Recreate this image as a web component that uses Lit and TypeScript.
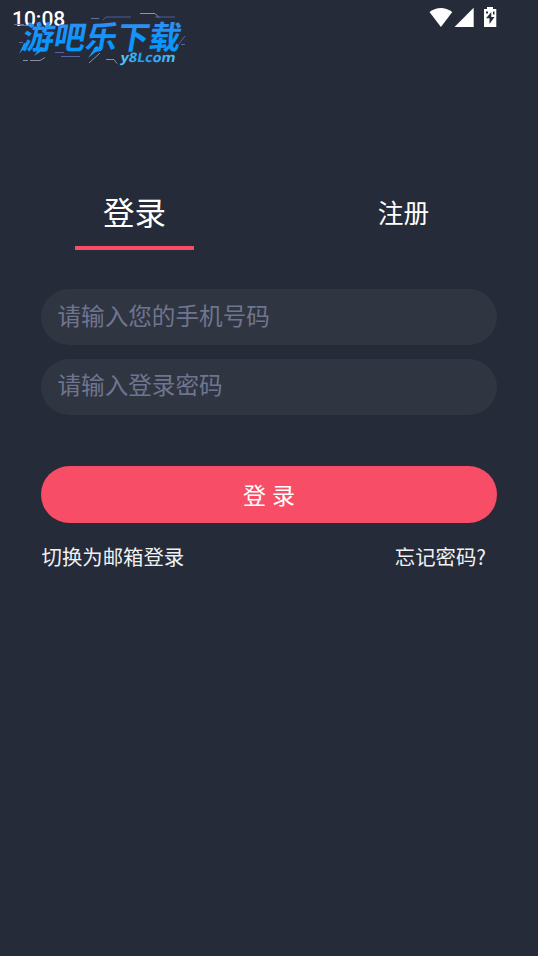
import { LitElement, css, html, svg } from 'lit'
import { customElement, property, state } from 'lit/decorators.js'
import { classMap } from 'lit/directives/class-map.js'

const traces = [
  { color: '#6a6f96', d: 'M91 18.5h8M20 25.500h8M14 24.500h10' },
  { color: '#4b5fa0', d: 'M103 20l3-3h25M155 17h20' },
  { color: '#8d94a5', d: 'M140 13.500h15l4 4' },
  { color: '#5b62a0', d: 'M23 42.500h-4M55 52.500h9M61 56.500h19M181 44.500h4M185 36l-7 9' },
  { color: '#8790a2', d: 'M30 60.500h10l5-3M23 60.500h5M100 53l-11 10M106 59.500h8l3 4' },
]

@customElement('brand-mark')
export class BrandMark extends LitElement {

  static get styles() {
    return css`
      :host {
        display: block;
      }
      svg {
        display: block;
      }
      text {
        font-family: "Noto Sans CJK SC", sans-serif;
        font-weight: 700;
      }
      .domain {
        font-family: "Open Sans", "Noto Sans", sans-serif;
        font-weight: 700;
      }
    `
  }

  render() {
    return html`
      <svg width="200" height="72" viewBox="0 0 200 72" fill="none">
        <defs>
          <linearGradient id="blue" x1="0" y1="0" x2="0" y2="1">
            <stop offset="0.3" stop-color="#2a90f5"></stop>
            <stop offset="0.65" stop-color="#0896ff"></stop>
          </linearGradient>
          <linearGradient id="sky" x1="0" y1="0" x2="1" y2="0">
            <stop offset="0" stop-color="#5fcaf5"></stop>
            <stop offset="0.4" stop-color="#1e9df5"></stop>
            <stop offset="1" stop-color="#4cc0f7"></stop>
          </linearGradient>
        </defs>
        ${traces.map((trace) => svg`<path d=${trace.d} stroke=${trace.color}></path>`)}
        <text transform="translate(21 48.500) skewX(-10)" font-size="32" textLength="158" lengthAdjust="spacingAndGlyphs" fill="url(#blue)">游吧乐下载</text>
        <path d="M28 44l-9 10 5-11zM46 48l-12 8 6-9zM101 48l-13 10 8-12z" fill="#1496fb"></path>
        <text class="domain" transform="translate(120 61.500) skewX(-10)" font-size="13" textLength="55" lengthAdjust="spacingAndGlyphs" fill="url(#sky)">y8Lcom</text>
      </svg>
    `
  }
}

@customElement('status-bar')
export class StatusBar extends LitElement {

  @property({ type: String })
  time = '10:08'

  static get styles() {
    return css`
      :host {
        box-sizing: border-box;
        display: flex;
        justify-content: space-between;
        height: 36px;
        padding: 6px 41px 0 12px;
      }
      .time {
        color: #fff;
        font: 500 21px/27px Roboto, sans-serif;
      }
      .icons {
        height: 22px;
        width: 68px;
      }
    `
  }

  render() {
    return html`
      <span class="time">${this.time}</span>
      <svg class="icons" viewBox="0 0 68 22" fill="#fff">
        <path d="M.5 6Q11.800-2 23.300 6L11.900 21z"></path>
        <path d="M44.700 1.800v19.200H25.500z"></path>
        <path fill-rule="evenodd" d="M58 1h6v2h3.300v18H55V3h3zM62.300 6l-5.300 6.300h3.500V18l5-7h-3.200zM57 5.500h2v2h-2zM64 5.500h1.500v3h-1.500z"></path>
      </svg>
    `
  }
}

@customElement('app-root')
export class AppRoot extends LitElement {

  @state()
  _tab: 'login' | 'register' = 'login'

  private _renderTab(id: 'login' | 'register', label: string) {
    return html`
      <button class=${classMap({ tab: true, active: this._tab === id })} @click=${() => { this._tab = id }}>
        <span class="tab-label">${label}</span>
      </button>
    `
  }

  static get styles() {
    return css`
      :host {
        background: #252b38;
        box-sizing: border-box;
        display: block;
        font-family: "Noto Sans CJK SC", sans-serif;
        height: 956px;
        overflow: hidden;
        position: relative;
      }
      button {
        background: none;
        border: 0;
        color: #fff;
        cursor: pointer;
        font: inherit;
        padding: 0;
      }
      brand-mark {
        left: 0;
        position: absolute;
        top: 0;
      }
      .tabs {
        display: grid;
        grid-template-columns: 1fr 1fr;
        height: 66px;
        margin-top: 148px;
      }
      .tab {
        align-items: center;
        display: flex;
        flex-direction: column;
        font-size: 25.700px;
        line-height: 56px;
      }
      .tab.active {
        font-size: 31.500px;
        line-height: 54px;
      }
      .tab.active::after {
        background: #f74d66;
        content: "";
        height: 4px;
        margin-top: 8px;
        width: 119px;
      }
      .form {
        display: flex;
        flex-direction: column;
        padding: 39px 41px 0;
      }
      .field {
        background: #303641;
        border: 0;
        border-radius: 28px;
        box-sizing: border-box;
        color: #fff;
        font-family: inherit;
        font-size: 23.600px;
        height: 56px;
        margin-bottom: 13.500px;
        outline: none;
        padding: 0 17px 5px 16.500px;
        width: 100%;
      }
      .field::placeholder {
        color: #6f7590;
        opacity: 1;
      }
      .submit {
        background: #f74d66;
        border-radius: 28.500px;
        font-size: 23px;
        height: 56.500px;
        line-height: 56.500px;
        margin-top: 38px;
        word-spacing: 1px;
      }
      .links {
        display: flex;
        font-size: 20.400px;
        justify-content: space-between;
        line-height: 30px;
        margin-top: 18.500px;
        padding: 0 11px 0 .5px;
      }
      .links button {
        color: #f0f1f3;
      }
    `
  }

  render() {
    return html`
      <status-bar></status-bar>
      <brand-mark></brand-mark>
      <div class="tabs">
        ${this._renderTab('login', '登录')}
        ${this._renderTab('register', '注册')}
      </div>
      <div class="form">
        <input class="field" type="tel" placeholder="请输入您的手机号码">
        <input class="field" type="password" placeholder="请输入登录密码">
        <button class="submit">登 录</button>
        <div class="links">
          <button>切换为邮箱登录</button>
          <button>忘记密码?</button>
        </div>
      </div>
    `
  }
}
